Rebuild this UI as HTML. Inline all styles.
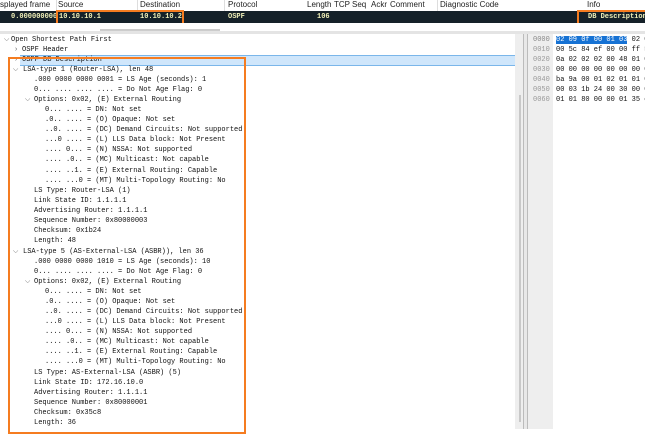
<!DOCTYPE html>
<html><head><style>
body{margin:0;width:645px;height:429px;overflow:hidden;background:#fff;position:relative;font-family:"Liberation Sans",sans-serif}
.a{position:absolute}
.hd{top:0;left:0;width:645px;height:11px;background:#fff;font-size:8px;color:#222;white-space:nowrap}
.hd span{position:absolute;top:0px}
.pk{top:11px;left:0;width:645px;height:12px;background:#152129;font-family:"Liberation Mono",monospace;font-size:7px;color:#f0f0b8;font-weight:bold;white-space:nowrap}
.pk span{position:absolute;top:2px}
.mono{font-family:"Liberation Mono",monospace;font-size:7px;color:#111;white-space:pre}
.tr div{position:absolute;height:10px;line-height:10px}
.ch{color:#666}
.hx div{position:absolute;height:10px;line-height:10px;white-space:pre}
</style></head><body>
<div class="a hd">
<span style="left:0">splayed frame</span><span style="left:58px">Source</span><span style="left:140px">Destination</span><span style="left:228px">Protocol</span><span style="left:307px">Length</span><span style="left:334px">TCP</span><span style="left:352px">Seq</span><span style="left:371px">Ackr</span><span style="left:390px">Comment</span><span style="left:440px">Diagnostic Code</span><span style="left:587px">Info</span>
</div>
<div class="a" style="top:0;left:56px;width:1px;height:11px;background:#ddd"></div>
<div class="a" style="top:0;left:137px;width:1px;height:11px;background:#ddd"></div>
<div class="a" style="top:0;left:224px;width:1px;height:11px;background:#ddd"></div>
<div class="a" style="top:0;left:437px;width:1px;height:11px;background:#ddd"></div>
<div class="a pk">
<span style="left:11px">0.000000000</span><span style="left:59px">10.10.10.1</span><span style="left:140px">10.10.10.2</span><span style="left:228px">OSPF</span><span style="left:317px">106</span><span style="left:588px">DB Description</span>
</div>
<div class="a" style="left:56px;top:10px;width:124px;height:12px;border:2px solid #f57c20"></div>
<div class="a" style="left:577px;top:10px;width:70px;height:12px;border:2px solid #f57c20"></div>
<div class="a" style="top:23px;left:0;width:645px;height:8px;background:#fff"></div>
<div class="a" style="top:29px;left:100px;width:120px;height:2px;background:#ccc"></div>
<div class="a" style="top:31px;left:0;width:645px;height:3px;background:#e4e4e4"></div>
<div class="a" style="top:34px;left:515px;width:8px;height:395px;background:#eee"></div>
<div class="a" style="top:95px;left:519px;width:2px;height:327px;background:#c8c8c8"></div>
<div class="a" style="top:34px;left:523px;width:5px;height:395px;background:#e8e8e8;border-left:1px solid #bbb;border-right:1px solid #bbb;box-sizing:border-box"></div>
<div class="a" style="top:55px;left:20px;width:495px;height:11px;background:#cfe6fb;border-top:1px solid #7ab6ea;border-bottom:1px solid #7ab6ea;box-sizing:border-box"></div>
<div class="a mono tr" style="top:35px;left:0;width:515px;height:394px">
<div style="top:0;left:4px"><span class="ch">⌵</span></div><div style="top:0;left:11px">Open Shortest Path First</div>
<div style="top:10px;left:14px" class="ch">›</div><div style="top:10px;left:22px">OSPF Header</div>
<div style="top:20px;left:14px" class="ch">›</div><div style="top:20px;left:22px">OSPF DB Description</div>
<div style="top:30px;left:13px" class="ch">⌵</div><div style="top:30px;left:23px">LSA-type 1 (Router-LSA), len 48</div>
<div style="top:40px;left:34px">.000 0000 0000 0001 = LS Age (seconds): 1</div>
<div style="top:50px;left:34px">0... .... .... .... = Do Not Age Flag: 0</div>
<div style="top:60px;left:25px" class="ch">⌵</div><div style="top:60px;left:34px">Options: 0x02, (E) External Routing</div>
<div style="top:70px;left:45px">0... .... = DN: Not set</div>
<div style="top:80px;left:45px">.0.. .... = (O) Opaque: Not set</div>
<div style="top:90px;left:45px">..0. .... = (DC) Demand Circuits: Not supported</div>
<div style="top:100px;left:45px">...0 .... = (L) LLS Data block: Not Present</div>
<div style="top:110px;left:45px">.... 0... = (N) NSSA: Not supported</div>
<div style="top:120px;left:45px">.... .0.. = (MC) Multicast: Not capable</div>
<div style="top:131px;left:45px">.... ..1. = (E) External Routing: Capable</div>
<div style="top:141px;left:45px">.... ...0 = (MT) Multi-Topology Routing: No</div>
<div style="top:151px;left:34px">LS Type: Router-LSA (1)</div>
<div style="top:161px;left:34px">Link State ID: 1.1.1.1</div>
<div style="top:171px;left:34px">Advertising Router: 1.1.1.1</div>
<div style="top:181px;left:34px">Sequence Number: 0x80000003</div>
<div style="top:191px;left:34px">Checksum: 0x1b24</div>
<div style="top:201px;left:34px">Length: 48</div>
<div style="top:212px;left:13px" class="ch">⌵</div><div style="top:212px;left:23px">LSA-type 5 (AS-External-LSA (ASBR)), len 36</div>
<div style="top:222px;left:34px">.000 0000 0000 1010 = LS Age (seconds): 10</div>
<div style="top:232px;left:34px">0... .... .... .... = Do Not Age Flag: 0</div>
<div style="top:242px;left:25px" class="ch">⌵</div><div style="top:242px;left:34px">Options: 0x02, (E) External Routing</div>
<div style="top:252px;left:45px">0... .... = DN: Not set</div>
<div style="top:262px;left:45px">.0.. .... = (O) Opaque: Not set</div>
<div style="top:272px;left:45px">..0. .... = (DC) Demand Circuits: Not supported</div>
<div style="top:282px;left:45px">...0 .... = (L) LLS Data block: Not Present</div>
<div style="top:292px;left:45px">.... 0... = (N) NSSA: Not supported</div>
<div style="top:302px;left:45px">.... .0.. = (MC) Multicast: Not capable</div>
<div style="top:312px;left:45px">.... ..1. = (E) External Routing: Capable</div>
<div style="top:322px;left:45px">.... ...0 = (MT) Multi-Topology Routing: No</div>
<div style="top:333px;left:34px">LS Type: AS-External-LSA (ASBR) (5)</div>
<div style="top:343px;left:34px">Link State ID: 172.16.10.0</div>
<div style="top:353px;left:34px">Advertising Router: 1.1.1.1</div>
<div style="top:363px;left:34px">Sequence Number: 0x80000001</div>
<div style="top:373px;left:34px">Checksum: 0x35c8</div>
<div style="top:383px;left:34px">Length: 36</div>
</div>
<div class="a" style="left:8px;top:57px;width:234px;height:373px;border:2px solid #f57c20"></div>
<div class="a" style="top:34px;left:528px;width:25px;height:395px;background:#eee"></div>
<div class="a mono hx" style="top:35px;left:533px;width:112px;height:80px;overflow:hidden">
<div style="top:0;left:0;color:#888">0000</div><div style="top:0;left:23px"><span style="background:#1672d4;color:#fff">02 09 0f 00 01 03</span> 02 0</div>
<div style="top:10px;left:0;color:#999">0010</div><div style="top:10px;left:23px">00 5c 84 ef 00 00 ff 5</div>
<div style="top:20px;left:0;color:#999">0020</div><div style="top:20px;left:23px">0a 02 02 02 00 48 01 0</div>
<div style="top:30px;left:0;color:#999">0030</div><div style="top:30px;left:23px">00 00 00 00 00 00 00 0</div>
<div style="top:40px;left:0;color:#999">0040</div><div style="top:40px;left:23px">ba 9a 00 01 02 01 01 0</div>
<div style="top:50px;left:0;color:#999">0050</div><div style="top:50px;left:23px">00 03 1b 24 00 30 00 0</div>
<div style="top:60px;left:0;color:#999">0060</div><div style="top:60px;left:23px">01 01 80 00 00 01 35 c</div>
</div>
</body></html>
